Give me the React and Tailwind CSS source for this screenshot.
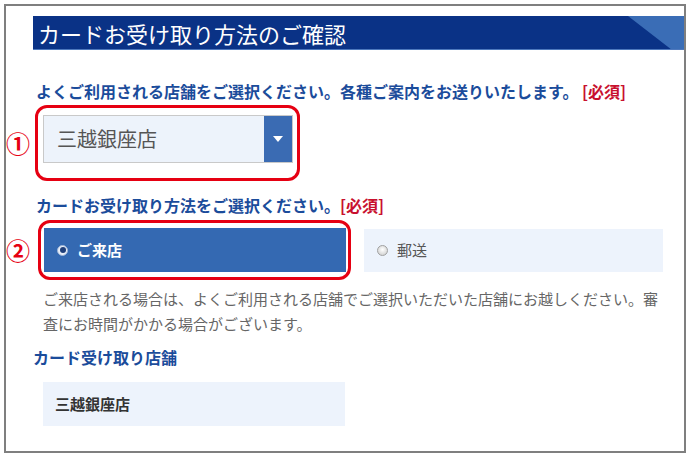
import React from "react";

const jp = { fontFamily: '"Noto Sans CJK JP", "Noto Sans", sans-serif' };

function Radio({ checked }) {
  if (checked) {
    return (
      <span className="w-[11px] h-[11px] rounded-full bg-[#e8eef8] border border-[#9fb6d8] flex items-center justify-center shrink-0">
        <span className="w-[6px] h-[6px] rounded-full bg-[#1f3f7a]" />
      </span>
    );
  }
  return (
    <span className="w-[11px] h-[11px] rounded-full bg-[radial-gradient(circle_at_50%_40%,#ffffff,#c8c8c8)] border border-[#a0a0a0] shrink-0" />
  );
}

export default function App() {
  return (
    <div className="w-[691px] h-[457px] bg-white pt-[4px] pl-[4px]" style={jp}>
      <div className="w-[682px] h-[449px] border-2 border-[#7f7f7f] flex flex-col">
        {/* header */}
        <div className="mt-[10px] ml-[27px] h-[34px] bg-[#0a3286] border-b border-[#4d78bd] relative overflow-hidden flex items-center">
          <svg className="absolute right-0 top-0" width="60" height="34" viewBox="0 0 60 34">
            <polygon points="4,0 60,0 60,34 48,34" fill="#3a6db6" />
          </svg>
          <span className="relative pl-[5px] text-[22px] leading-none text-white font-normal">
            カードお受け取り方法のご確認
          </span>
        </div>

        {/* label 1 */}
        <div className="mt-[31px] ml-[30px] text-[16px] leading-[20px] font-bold text-[#1b4c9b]">
          よくご利用される店舗をご選択ください。各種ご案内をお送りいたします。
          <span className="text-[#c8102e]"> [必須]</span>
        </div>

        {/* select row */}
        <div className="mt-[4px] flex items-center">
          <span className="w-[29px] text-[24px] leading-none text-[#e60012] font-bold">①</span>
          <div className="w-[265px] h-[76px] border-[3px] border-[#e60012] rounded-[12px] pt-[7px] pl-[5px]">
            <div className="w-[250px] h-[48px] bg-[#edf3fb] border border-[#c9c9c9] flex items-stretch">
              <div className="flex-1 flex items-center pl-[13px] text-[20px] text-[#555555]">三越銀座店</div>
              <div className="w-[28px] bg-[#3a6bb3] flex items-center justify-center">
                <svg width="10" height="6" viewBox="0 0 10 6">
                  <polygon points="0,0 10,0 5,6" fill="#ffffff" />
                </svg>
              </div>
            </div>
          </div>
        </div>

        {/* label 2 */}
        <div className="mt-[14px] ml-[30px] text-[16px] leading-[20px] font-bold text-[#1b4c9b]">
          カードお受け取り方法をご選択ください。
          <span className="text-[#c8102e]">[必須]</span>
        </div>

        {/* options row */}
        <div className="mt-[5px] flex items-center">
          <span className="w-[32px] text-[24px] leading-none text-[#e60012] font-bold">②</span>
          <div className="w-[313px] h-[60px] border-[3px] border-[#e60012] rounded-[12px] pt-[5px] pl-[3px]">
            <div className="w-[302px] h-[44px] bg-[#3469b2] flex items-center pl-[13px] gap-[9px]">
              <Radio checked />
              <span className="text-[15px] font-bold text-white">ご来店</span>
            </div>
          </div>
          <div className="ml-[13px] w-[299px] h-[43px] bg-[#edf3fc] flex items-center pl-[13px] gap-[9px]">
            <Radio />
            <span className="text-[15px] text-[#555555]">郵送</span>
          </div>
        </div>

        {/* paragraph */}
        <p className="mt-[6px] ml-[37px] w-[622px] text-[15px] leading-[25px] text-[#666666]">
          ご来店される場合は、よくご利用される店舗でご選択いただいた店舗にお越しください。審査にお時間がかかる場合がございます。
        </p>

        {/* label 3 */}
        <div className="mt-[11px] ml-[27px] text-[16px] leading-[20px] font-bold text-[#1b4c9b]">
          カード受け取り店舗
        </div>

        <div className="mt-[15px] ml-[37px] w-[302px] h-[44px] bg-[#edf3fc] flex items-center pl-[12px] text-[15px] font-bold text-[#333333]">
          三越銀座店
        </div>
      </div>
    </div>
  );
}
